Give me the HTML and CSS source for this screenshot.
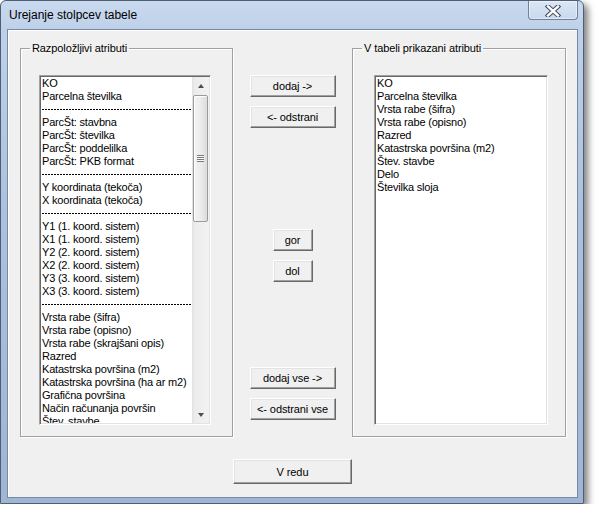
FILE: index.html
```html
<!DOCTYPE html>
<html lang="sl">
<head>
<meta charset="utf-8">
<title>Urejanje stolpcev tabele</title>
<link rel="stylesheet" href="styles.css">
</head>
<body>
<div class="window">
  <div class="titlebar">
    <span class="title">Urejanje stolpcev tabele</span>
    <div class="close">
      <svg width="16" height="12" viewBox="0 0 16 12">
        <path d="M3 1.5 L13 10.5 M13 1.5 L3 10.5" stroke="#3d4a5c" stroke-width="4.4" stroke-linecap="square" fill="none"/>
        <path d="M3 1.5 L13 10.5 M13 1.5 L3 10.5" stroke="#ffffff" stroke-width="2.4" stroke-linecap="square" fill="none"/>
      </svg>
    </div>
  </div>
  <div class="client">
    <div class="row">
      <fieldset class="group group-left">
        <legend>Razpoložljivi atributi</legend>
        <div class="listbox">
          <ul class="items">
            <li>KO</li>
            <li>Parcelna številka</li>
            <li class="sep"><span></span></li>
            <li>ParcŠt: stavbna</li>
            <li>ParcŠt: številka</li>
            <li>ParcŠt: poddelilka</li>
            <li>ParcŠt: PKB format</li>
            <li class="sep"><span></span></li>
            <li>Y koordinata (tekoča)</li>
            <li>X koordinata (tekoča)</li>
            <li class="sep"><span></span></li>
            <li>Y1 (1. koord. sistem)</li>
            <li>X1 (1. koord. sistem)</li>
            <li>Y2 (2. koord. sistem)</li>
            <li>X2 (2. koord. sistem)</li>
            <li>Y3 (3. koord. sistem)</li>
            <li>X3 (3. koord. sistem)</li>
            <li class="sep"><span></span></li>
            <li>Vrsta rabe (šifra)</li>
            <li>Vrsta rabe (opisno)</li>
            <li>Vrsta rabe (skrajšani opis)</li>
            <li>Razred</li>
            <li>Katastrska površina (m2)</li>
            <li>Katastrska površina (ha ar m2)</li>
            <li>Grafična površina</li>
            <li>Način računanja površin</li>
            <li>Štev. stavbe</li>
            <li>Delo</li>
          </ul>
          <div class="scrollbar">
            <div class="sb-btn"><span class="arrow-up"></span></div>
            <div class="sb-track">
              <div class="thumb"><span class="grip"></span></div>
            </div>
            <div class="sb-btn"><span class="arrow-down"></span></div>
          </div>
        </div>
      </fieldset>
      <div class="middle">
        <button class="btn btn-wide b-add">dodaj -&gt;</button>
        <button class="btn btn-wide b-gap">&lt;- odstrani</button>
        <button class="btn btn-small b-up">gor</button>
        <button class="btn btn-small b-gap">dol</button>
        <button class="btn btn-wide b-addall">dodaj vse -&gt;</button>
        <button class="btn btn-wide b-gap">&lt;- odstrani vse</button>
      </div>
      <fieldset class="group group-right">
        <legend>V tabeli prikazani atributi</legend>
        <div class="listbox listbox-right">
          <ul class="items">
            <li>KO</li>
            <li>Parcelna številka</li>
            <li>Vrsta rabe (šifra)</li>
            <li>Vrsta rabe (opisno)</li>
            <li>Razred</li>
            <li>Katastrska površina (m2)</li>
            <li>Štev. stavbe</li>
            <li>Delo</li>
            <li>Številka sloja</li>
          </ul>
        </div>
      </fieldset>
    </div>
    <button class="btn btn-ok">V redu</button>
  </div>
</div>
</body>
</html>
```
FILE: styles.css
```css
html, body {
  margin: 0;
  padding: 0;
  background: #ffffff;
}

body {
  font-family: "Liberation Sans", Arial, sans-serif;
  font-size: 11px;
  color: #000;
}

.window {
  box-sizing: border-box;
  width: 584px;
  height: 504px;
  border: 1px solid #4f5e72;
  border-radius: 6px 6px 0 0;
  background: linear-gradient(180deg, #c9d9ee 0px, #bfd1ea 28px, #adc2de 200px, #9fb5d3 504px);
  padding: 0 5px 5px 6px;
  display: flex;
  flex-direction: column;
  box-shadow: 4px 4px 7px rgba(0, 0, 0, 0.5);
}

.titlebar {
  height: 28px;
  display: flex;
  align-items: flex-start;
  flex: none;
}

.title {
  font-family: "Liberation Sans", Arial, sans-serif;
  font-size: 12px;
  line-height: 14px;
  padding-top: 7px;
  padding-left: 2px;
  color: #000;
}

.close {
  margin-left: auto;
  margin-right: 0;
  width: 48px;
  height: 18px;
  border: 1px solid #6f809a;
  border-top: none;
  border-radius: 0 0 4px 4px;
  background: linear-gradient(180deg, rgba(255,255,255,0.35), rgba(255,255,255,0.1));
  box-shadow: inset 0 0 0 1px rgba(255,255,255,0.45);
  display: flex;
  align-items: center;
  justify-content: center;
}

.close svg {
  display: block;
  margin-top: 1px;
}

.client {
  flex: 1;
  background: #f0f0f0;
  border: 1px solid #7689a3;
  box-shadow: inset 1px 1px 0 #ffffff;
  padding: 12px 0 0 12px;
  display: flex;
  flex-direction: column;
}

.row {
  display: grid;
  grid-template-columns: 213px 119px 214px;
  align-items: start;
}

.group {
  margin: 0;
  min-inline-size: 0;
  border: 1px solid #a0a0a0;
  box-shadow: 1px 1px 0 #ffffff, inset 1px 1px 0 #ffffff;
  padding: 20px 20px 11px 18px;
}

.group-right {
  padding: 20px 16px 11px 21px;
}

.group legend {
  margin-left: -9px;
  padding: 0 2px;
  font-size: 11px;
  line-height: 13px;
  letter-spacing: -0.1px;
}

.group-right legend {
  margin-left: -12px;
}

.listbox {
  box-sizing: border-box;
  width: 172px;
  height: 350px;
  background: #fff;
  border: 1px solid;
  border-color: #a0a0a0 #ffffff #ffffff #a0a0a0;
  box-shadow: inset 1px 1px 0 #696969, inset -1px -1px 0 #e3e3e3;
  padding: 1px;
  display: flex;
}

.listbox-right {
  width: 174px;
}

.items {
  list-style: none;
  margin: 0;
  padding: 0 0 0 1px;
  flex: 1;
  overflow: hidden;
}

.items li {
  height: 13px;
  line-height: 13px;
  white-space: nowrap;
  letter-spacing: -0.2px;
}

.items li.sep {
  display: flex;
  align-items: center;
}

.items li.sep span {
  display: block;
  width: 150px;
  height: 1px;
  background: repeating-linear-gradient(90deg, #000 0 2px, transparent 2px 3px);
}

.scrollbar {
  width: 17px;
  display: flex;
  flex-direction: column;
  background: linear-gradient(90deg, #e2e2e2 0, #ececec 3px, #f2f2f2 100%);
}

.sb-btn {
  height: 17px;
  flex: none;
  display: flex;
  align-items: center;
  justify-content: center;
}

.arrow-up {
  width: 0;
  height: 0;
  border-left: 3.5px solid transparent;
  border-right: 3.5px solid transparent;
  border-bottom: 4px solid #4d4d4d;
}

.arrow-down {
  width: 0;
  height: 0;
  border-left: 3.5px solid transparent;
  border-right: 3.5px solid transparent;
  border-top: 4px solid #4d4d4d;
}

.sb-track {
  flex: 1;
  padding-top: 1px;
}

.thumb {
  box-sizing: border-box;
  margin-left: 1px;
  width: 15px;
  height: 127px;
  border: 1px solid #9b9b9b;
  border-radius: 2px;
  background: linear-gradient(90deg, #f4f4f4 0, #ececec 50%, #dcdcdc 100%);
  box-shadow: inset 1px 1px 0 #fff;
  display: flex;
  align-items: center;
  justify-content: center;
}

.grip {
  display: block;
  width: 7px;
  height: 7px;
  background: repeating-linear-gradient(180deg, #7a7a7a 0 1px, #f8f8f8 1px 2px);
}

.middle {
  display: flex;
  flex-direction: column;
  align-items: center;
}

.btn {
  box-sizing: border-box;
  font-family: "Liberation Sans", Arial, sans-serif;
  font-size: 11px;
  letter-spacing: -0.1px;
  color: #000;
  background: #f0f0f0;
  border: 1px solid;
  border-color: #ffffff #696969 #696969 #ffffff;
  box-shadow: inset -1px -1px 0 #a0a0a0, inset 1px 1px 0 #e3e3e3;
  border-radius: 0;
  padding: 0;
  margin: 0;
  display: block;
}

.btn-wide {
  width: 86px;
  height: 22px;
}

.btn-small {
  width: 40px;
  height: 22px;
}

.b-add {
  margin-top: 33px;
}

.b-gap {
  margin-top: 9px;
}

.b-up {
  margin-top: 101px;
}

.b-addall {
  margin-top: 85px;
}

.btn-ok {
  width: 119px;
  height: 25px;
  margin-top: 22px;
  margin-left: 213px;
}
```
